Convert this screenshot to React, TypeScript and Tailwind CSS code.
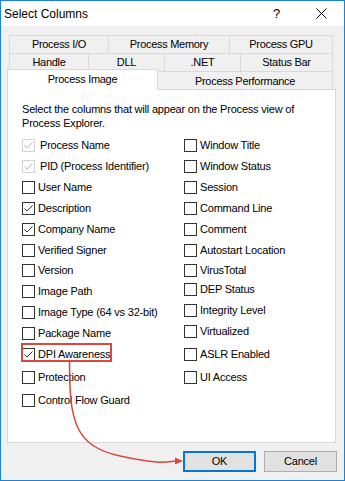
import React from "react";

type Item = { label: string; h: string; checked?: boolean; disabled?: boolean };

const left: Item[] = [
  { label: "Process Name", h: "h-[21px]", checked: true, disabled: true },
  { label: "PID (Process Identifier)", h: "h-[21px]", checked: true, disabled: true },
  { label: "User Name", h: "h-[21px]" },
  { label: "Description", h: "h-[21px]", checked: true },
  { label: "Company Name", h: "h-[21px]", checked: true },
  { label: "Verified Signer", h: "h-[20px]" },
  { label: "Version", h: "h-[21px]" },
  { label: "Image Path", h: "h-[21px]" },
  { label: "Image Type (64 vs 32-bit)", h: "h-[21px]" },
  { label: "Package Name", h: "h-[21px]" },
  { label: "DPI Awareness", h: "h-[23px]", checked: true },
  { label: "Protection", h: "h-[23px]" },
  { label: "Control Flow Guard", h: "h-[13px]" },
];

const right: Item[] = [
  { label: "Window Title", h: "h-[21px]" },
  { label: "Window Status", h: "h-[21px]" },
  { label: "Session", h: "h-[21px]" },
  { label: "Command Line", h: "h-[21px]" },
  { label: "Comment", h: "h-[21px]" },
  { label: "Autostart Location", h: "h-[20px]" },
  { label: "VirusTotal", h: "h-[19px]" },
  { label: "DEP Status", h: "h-[21px]" },
  { label: "Integrity Level", h: "h-[21px]" },
  { label: "Virtualized", h: "h-[23px]" },
  { label: "ASLR Enabled", h: "h-[23px]" },
  { label: "UI Access", h: "h-[13px]" },
];

function Check({ item }: { item: Item }) {
  return (
    <div className={`${item.h} flex items-start`}>
      <div className="flex items-center h-[13px]">
        <div
          className={`w-[13px] h-[13px] border bg-white flex items-center justify-center ${
            item.disabled ? "border-[#d4d4d4]" : "border-[#333333]"
          }`}
        >
          {item.checked && (
            <svg width="11" height="11" viewBox="0 0 11 11">
              <path
                d="M1.5 5.5 L4 8 L9.5 2.5"
                fill="none"
                stroke={item.disabled ? "#b8b8b8" : "#333333"}
                strokeWidth="1"
              />
            </svg>
          )}
        </div>
        <span
          className={`${item.disabled ? "ml-[5px]" : "ml-[3px]"} text-[11px] leading-[13px] whitespace-nowrap`}
        >
          {item.label}
        </span>
      </div>
    </div>
  );
}

const tab = "border-t border-l border-[#d9d9d9] flex items-center justify-center text-[11px] tracking-[-0.3px]";

export default function App() {
  return (
    <div className="relative w-[345px] h-[481px] border border-[#1883d7] bg-[#f0f0f0] flex flex-col font-['Liberation_Sans',Arial,sans-serif] text-black overflow-hidden">
      <div className="h-[25px] bg-white flex items-center shrink-0">
        <span className="pl-[3px] text-[12px] leading-none">Select Columns</span>
        <div className="ml-auto flex h-full">
          <div className="w-[45px] h-full flex items-center justify-center text-[13px]">?</div>
          <div className="w-[45px] h-full flex items-center justify-center">
            <svg width="11" height="11" viewBox="0 0 11 11">
              <path d="M0.5 0.5 L10.5 10.5 M10.5 0.5 L0.5 10.5" stroke="#000" strokeWidth="1" />
            </svg>
          </div>
        </div>
      </div>
      <div className="flex-1 px-[6px] pt-[9px] flex flex-col tracking-[-0.2px]">
        <div className="ml-[2px] flex h-[18px]">
          <div className={`${tab} w-[99px]`}>Process I/O</div>
          <div className={`${tab} w-[121px]`}>Process Memory</div>
          <div className={`${tab} w-[104px] border-r`}>Process GPU</div>
        </div>
        <div className="ml-[2px] flex h-[18px]">
          <div className={`${tab} w-[79px]`}>Handle</div>
          <div className={`${tab} w-[76px]`}>DLL</div>
          <div className={`${tab} w-[76px]`}>.NET</div>
          <div className={`${tab} w-[93px] border-r`}>Status Bar</div>
        </div>
        <div className="flex h-[18px] items-start">
          <div className="relative z-10 -mt-[2px] w-[151px] h-[21px] bg-white border-t border-l border-r border-[#d9d9d9] flex items-center justify-center text-[11px] tracking-[-0.3px] pb-[1px]">
            Process Image
          </div>
          <div className="w-[175px] h-[18px] border-t border-r border-[#d9d9d9] flex items-center justify-center text-[11px] tracking-[-0.3px] pt-[1px]">
            Process Performance
          </div>
        </div>
        <div className="w-[329px] h-[354px] border border-[#d9d9d9] bg-white pl-[14px] pt-[12px]">
          <p className="text-[11px] leading-[14px]">
            Select the columns that will appear on the Process view of
            <br />
            Process Explorer.
          </p>
          <div className="mt-[9px] grid grid-cols-[162px_1fr]">
            <div className="flex flex-col">
              {left.map((it) => (
                <Check key={it.label} item={it} />
              ))}
            </div>
            <div className="flex flex-col">
              {right.map((it) => (
                <Check key={it.label} item={it} />
              ))}
            </div>
          </div>
        </div>
        <div className="mt-[8px] flex justify-end gap-[8px] pr-[1px]">
          <div className="w-[73px] h-[21px] border-2 border-[#0078d7] bg-[#e1e1e1] flex items-center justify-center text-[11px]">
            OK
          </div>
          <div className="w-[73px] h-[21px] border border-[#adadad] bg-[#e1e1e1] flex items-center justify-center text-[11px]">
            Cancel
          </div>
        </div>
      </div>
      <svg
        className="absolute -left-px -top-px pointer-events-none"
        width="345"
        height="481"
        viewBox="0 0 345 481"
      >
        <rect x="22" y="344" width="89" height="17" fill="none" stroke="#d9473d" strokeWidth="2" />
        <path
          d="M69.5 362 C69.5 420, 74 446, 120 456 S 168 461, 176 461"
          fill="none"
          stroke="#d9473d"
          strokeWidth="1.5"
        />
        <polygon points="175,457.5 183,461 175,464.5" fill="#d9473d" />
      </svg>
    </div>
  );
}
